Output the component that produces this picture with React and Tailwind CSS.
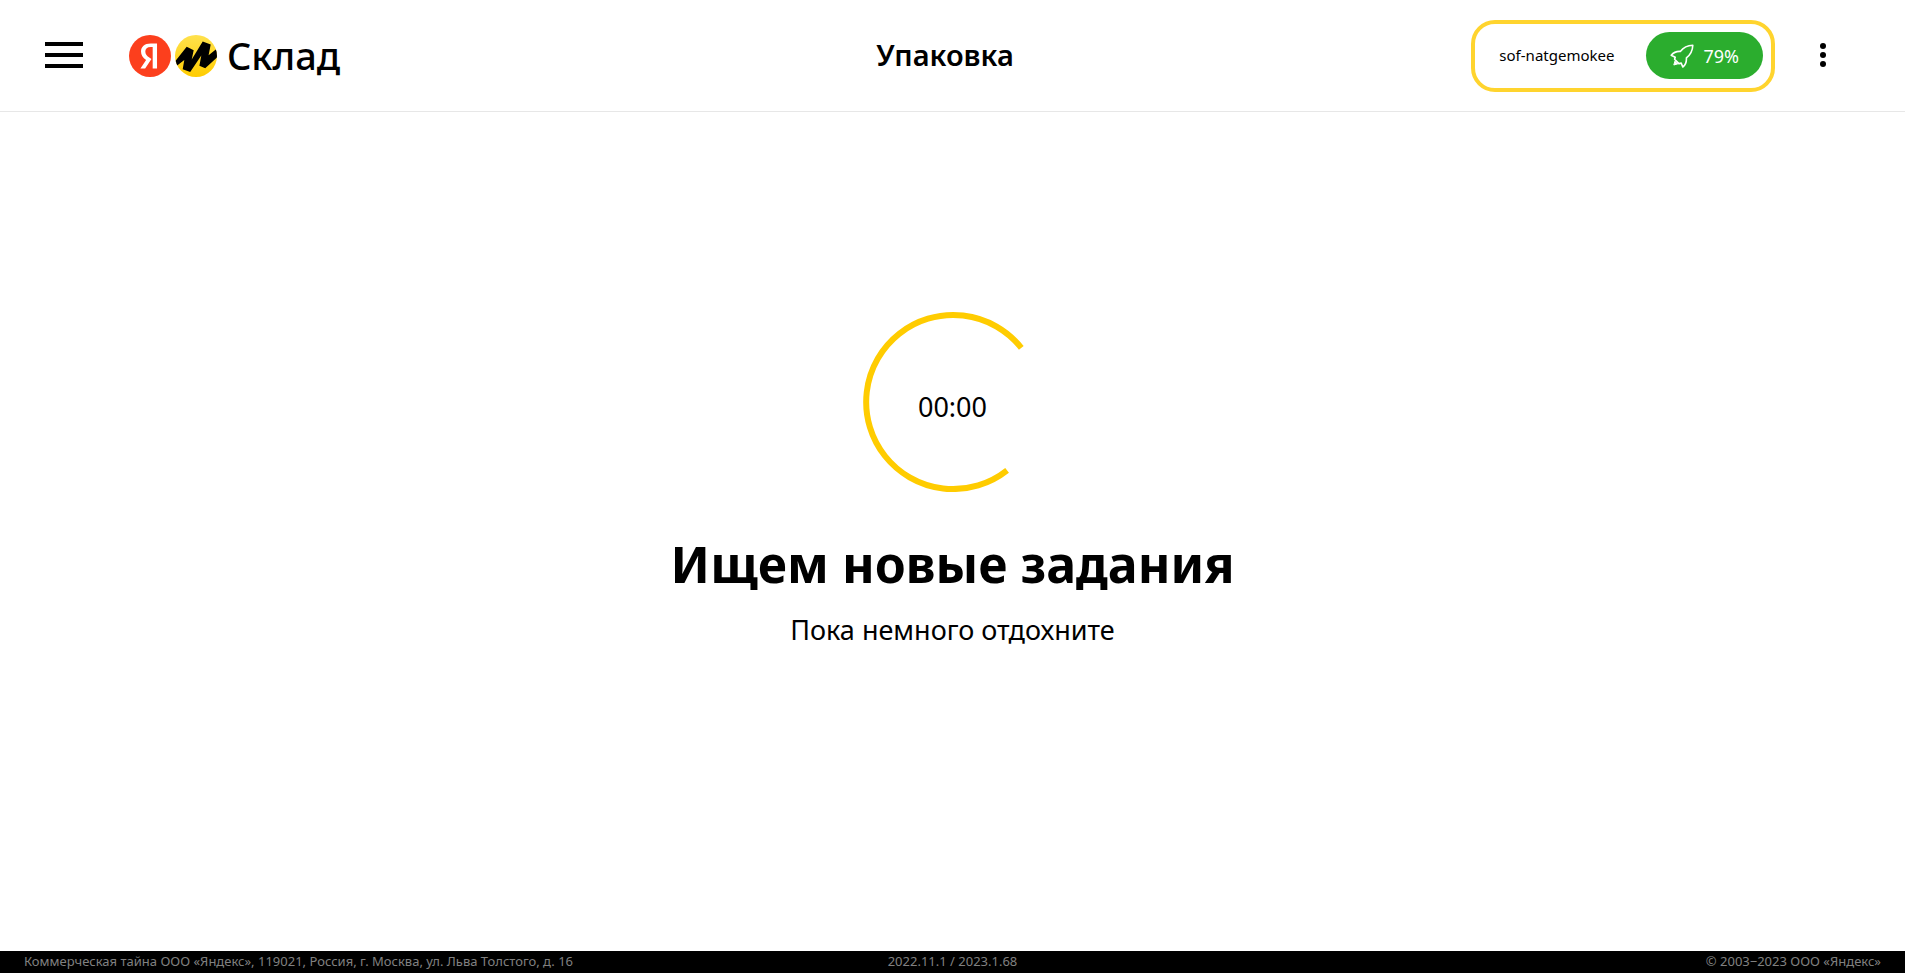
function YandexMark() {
  return (
    <svg viewBox="2.040 2 20 20" className="size-[42px]" aria-hidden="true">
      <circle cx="12.040" cy="12" r="10" fill="#fc3f1d" />
      <path
        d="M13.320 7.666h-.924c-1.694 0-2.585.858-2.585 2.123 0 1.430.616 2.100 1.881 2.959l1.045.704-3.003 4.487H7.490l2.695-4.014c-1.550-1.111-2.420-2.190-2.420-4.015 0-2.288 1.595-3.850 4.620-3.850h3.003v11.868H13.320V7.666z"
        fill="#fff"
      />
    </svg>
  );
}

function MarketMark() {
  return (
    <svg viewBox="0 0 42 42" className="size-[42px]" aria-hidden="true">
      <defs>
        <linearGradient id="market-fill" x1="0" y1="0" x2="0" y2="1">
          <stop offset="0" stopColor="#ffe14d" />
          <stop offset="1" stopColor="#ffcc00" />
        </linearGradient>
        <clipPath id="market-clip">
          <circle cx="21" cy="21" r="21" />
        </clipPath>
      </defs>
      <circle cx="21" cy="21" r="21" fill="url(#market-fill)" />
      <path
        clipPath="url(#market-clip)"
        d="M0 26.500 11.700 11.800 18.700 15.200 16.700 24.500 27.700 6.500 35.700 9.400 33.600 20.300 42 13.500V22.500L30.200 33.300 24.400 30.800 26.300 20.500 15.200 37 7.700 34.200 9.300 25 1.500 31z"
      />
    </svg>
  );
}

function Rocket() {
  return (
    <svg
      viewBox="0 0 24 24"
      className="size-6"
      fill="none"
      stroke="#fff"
      strokeWidth="1.600"
      strokeLinejoin="round"
      strokeLinecap="round"
      aria-hidden="true"
    >
      <path d="M22.800 1.200C17.500 1.400 13.500 3.300 10.300 7.400 7.500 7.200 3.500 8.500 1.200 11.200L5.200 13.200 4.600 15.200 9 19.600 11.200 19.100 12.800 23C15.400 21 16.600 17.200 16.400 13.900 20.600 10.600 22.600 6.800 22.800 1.200Z" />
      <path d="M5 17 3.800 21 8 19.800Z" fill="#fff" strokeWidth="1" />
    </svg>
  );
}

export default function App() {
  return (
    <div className="flex min-h-screen flex-col bg-white font-['Noto_Sans',sans-serif] text-black">
      <header className="grid grid-cols-[1fr_auto_1fr] items-center border-b border-[#e7e7e7] pt-5 pr-[60px] pb-[19px] pl-[45px]">
        <div className="flex items-center">
          <button type="button" aria-label="Меню" className="flex w-[38px] flex-col gap-[7px] pb-0.5">
            <span className="h-1 w-full bg-black" />
            <span className="h-1 w-full bg-black" />
            <span className="h-1 w-full bg-black" />
          </button>
          <a href="#" className="ml-[46px] flex items-center gap-1">
            <YandexMark />
            <MarketMark />
            <span className="ml-1.5 pb-0.5 text-[38px] leading-[48px] font-medium">Склад</span>
          </a>
        </div>
        <h1 className="pb-0.5 text-[29px] leading-9 font-semibold">Упаковка</h1>
        <div className="flex items-center justify-end gap-[26px]">
          <div className="flex h-[72px] items-center gap-8 rounded-3xl border-4 border-[#ffd42e] pr-2 pb-px pl-6">
            <span className="text-[15px]">sof-natgemokee</span>
            <button
              type="button"
              className="flex h-[47px] items-center gap-[9px] rounded-full bg-[#2bad2e] px-6 text-lg text-white"
            >
              <Rocket />
              79%
            </button>
          </div>
          <button type="button" aria-label="Ещё" className="flex w-11 flex-col items-center gap-[3px] pb-0.5">
            <span className="size-1.5 rounded-full bg-black" />
            <span className="size-1.5 rounded-full bg-black" />
            <span className="size-1.5 rounded-full bg-black" />
          </button>
        </div>
      </header>

      <main className="flex flex-1 flex-col items-center pt-[200px] text-center">
        <div className="grid size-[180px] place-items-center">
          <svg viewBox="0 0 180 180" className="col-start-1 row-start-1 size-full" aria-hidden="true">
            <path
              d="M158.300 35.900A87 87 0 1 0 144.100 158.300"
              fill="none"
              stroke="#fc0"
              strokeWidth="6"
            />
          </svg>
          <span className="col-start-1 row-start-1 pt-2.5 text-[27px] leading-8">00:00</span>
        </div>
        <h2 className="mt-9 text-[50px] leading-[72px] font-bold">Ищем новые задания</h2>
        <p className="mt-3 text-[27px] leading-9">Пока немного отдохните</p>
      </main>

      <footer className="grid grid-cols-[1fr_auto_1fr] bg-black px-6 pb-0.5 text-[13px] leading-5 text-[#808080]">
        <span>Коммерческая тайна ООО «Яндекс», 119021, Россия, г. Москва, ул. Льва Толстого, д. 16</span>
        <span>2022.11.1 / 2023.1.68</span>
        <span className="text-right">© 2003−2023 ООО «Яндекс»</span>
      </footer>
    </div>
  );
}
